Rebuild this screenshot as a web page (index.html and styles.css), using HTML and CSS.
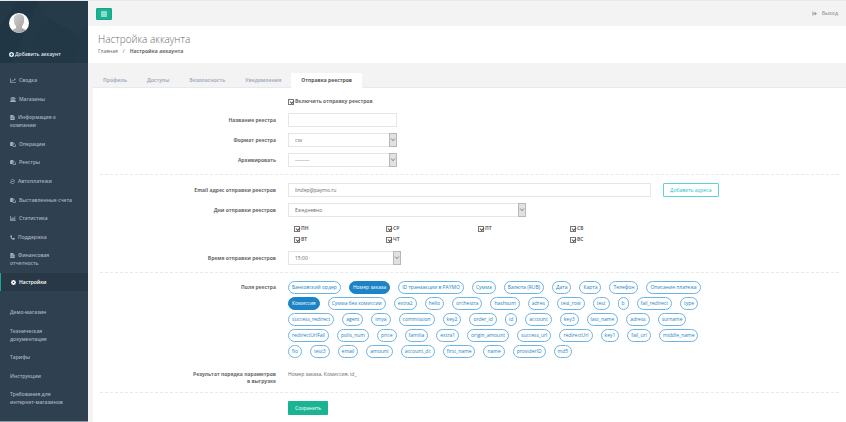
FILE: index.html
```html
<!DOCTYPE html>
<html lang="ru">
<head>
<meta charset="utf-8">
<title>Настройка аккаунта</title>
<link rel="stylesheet" href="styles.css">
</head>
<body>
<svg class="defs" aria-hidden="true">
  <symbol id="i-chart" viewBox="0 0 16 14"><path d="M1 1v12h15M3 10l4-4 2 2 5-5M11 3h3v3" fill="none" stroke="currentColor" stroke-width="2"/></symbol>
  <symbol id="i-bank" viewBox="0 0 16 14"><path d="M8 0l8 3v1H0V3zM2 5h2v5H2zM5 5h2v5H5zM9 5h2v5H9zM12 5h2v5h-2zM1 10h14v2H1zM0 12h16v2H0z" fill="currentColor"/></symbol>
  <symbol id="i-file" viewBox="0 0 12 14"><path d="M0 0h7v5h5v9H0zM8 0l4 4H8zM3 7v1h6V7zM3 10v1h6v-1z" fill="currentColor" fill-rule="evenodd"/></symbol>
  <symbol id="i-copy" viewBox="0 0 16 14"><path d="M0 1h3v10H0zM3 0h6v4H7v7H3z" fill="currentColor"/><path d="M8 5h4l3 3v5H8z" fill="none" stroke="currentColor" stroke-width="2"/></symbol>
  <symbol id="i-refresh" viewBox="0 0 16 14"><path d="M2 4a6 5 0 0 1 11-1M14 10a6 5 0 0 1-11 1M4 7h8" fill="none" stroke="currentColor" stroke-width="2"/><path d="M15 1v5h-5zM1 13V8h5z" fill="currentColor"/></symbol>
  <symbol id="i-bars" viewBox="0 0 16 14"><path d="M1 0v13h15M4 12V7M7 12V3M10 12V5M13 12V1" fill="none" stroke="currentColor" stroke-width="2"/></symbol>
  <symbol id="i-phone" viewBox="0 0 14 14"><path d="M1 2l3-2 2 4-2 2 4 4 2-2 4 2-2 3C7 15 0 8 1 2z" fill="currentColor"/></symbol>
  <symbol id="i-gear" viewBox="0 0 14 14"><path d="M6 0h2l1 2 2-1 2 2-1 2 2 1v2l-2 1 1 2-2 2-2-1-1 2H6l-1-2-2 1-2-2 1-2-2-1V6l2-1-1-2 2-2 2 1zM7 5a2 2 0 1 0 0 4 2 2 0 0 0 0-4z" fill="currentColor" fill-rule="evenodd"/></symbol>
  <symbol id="i-plus" viewBox="0 0 14 14"><path d="M7 0a7 7 0 1 0 0 14A7 7 0 0 0 7 0zM6 3h2v3h3v2H8v3H6V8H3V6h3z" fill="currentColor" fill-rule="evenodd"/></symbol>
  <symbol id="i-exit" viewBox="0 0 16 14"><path d="M6 2H1v10h5" fill="none" stroke="currentColor" stroke-width="2"/><path d="M4 5h5V1l7 6-7 6V9H4z" fill="currentColor"/></symbol>
  <symbol id="i-down" viewBox="0 0 8 14"><path d="M1.500 5L4 8l2.500-3" fill="none" stroke="currentColor"/></symbol>
</svg>
<div class="page">
  <aside class="sidebar">
    <div class="profile">
      <svg class="poly" viewBox="0 0 88 62" preserveAspectRatio="none" aria-hidden="true"><path d="M0 26L18 0h20L12 62H0z" fill="#213645"/><path d="M38 0l8 16 32 18 10-12V0z" fill="#263b4a"/><path d="M46 16l-16 28 12 18h34l2-28z" fill="#233847"/></svg>
      <svg class="avatar" viewBox="0 0 20 20" role="img" aria-label="Аватар"><defs><linearGradient id="skin" x2="1" y2="1"><stop stop-color="#d4d4d4"/><stop offset="1" stop-color="#999"/></linearGradient><clipPath id="round"><circle cx="10" cy="10" r="10"/></clipPath></defs><g clip-path="url(#round)"><path d="M0 0h20v20H0z" fill="#fff"/><path d="M10 1c4 0 6 3 5 7-.3 3-1 4-2 5v2l4 2v3H3v-3l4-2v-2c-1-1-2-2-2-5-1-4 1-7 5-7z" fill="url(#skin)"/></g></svg>
      <a class="add" href="#"><svg class="ico"><use href="#i-plus"/></svg>Добавить аккаунт</a>
    </div>
    <nav class="menu">
      <a href="#"><svg class="ico wide"><use href="#i-chart"/></svg>Сводка</a>
      <a href="#"><svg class="ico wide"><use href="#i-bank"/></svg>Магазины</a>
      <a href="#"><svg class="ico"><use href="#i-file"/></svg>Информация о компании</a>
      <a href="#"><svg class="ico wide"><use href="#i-copy"/></svg>Операции</a>
      <a href="#"><svg class="ico wide"><use href="#i-copy"/></svg>Реестры</a>
      <a href="#"><svg class="ico"><use href="#i-refresh"/></svg>Автоплатежи</a>
      <a href="#"><svg class="ico wide"><use href="#i-copy"/></svg>Выставленные счета</a>
      <a href="#"><svg class="ico wide"><use href="#i-bars"/></svg>Статистика</a>
      <a href="#"><svg class="ico"><use href="#i-phone"/></svg>Поддержка</a>
      <a href="#"><svg class="ico"><use href="#i-file"/></svg>Финансовая отчетность</a>
      <a href="#" class="current"><svg class="ico"><use href="#i-gear"/></svg>Настройки</a>
    </nav>
    <nav class="menu extra">
      <a href="#">Демо-магазин</a>
      <a href="#">Техническая документация</a>
      <a href="#">Тарифы</a>
      <a href="#">Инструкции</a>
      <a href="#">Требования для интернет-магазинов</a>
    </nav>
  </aside>
  <main class="main">
    <header class="topbar">
      <button class="toggle" type="button" aria-label="Меню"><svg viewBox="0 0 6 6"><path d="M0 1h6M0 3h6M0 5h6" stroke="currentColor"/></svg></button>
      <a class="logout" href="#"><svg class="ico"><use href="#i-exit"/></svg>Выход</a>
    </header>
    <div class="heading">
      <h1>Настройка аккаунта</h1>
      <div class="crumbs"><a href="#">Главная</a><span>/</span><strong>Настройка аккаунта</strong></div>
    </div>
    <div class="tabs">
      <a href="#">Профиль</a><a href="#">Доступы</a><a href="#">Безопасность</a><a href="#">Уведомления</a><a href="#" class="on">Отправка реестров</a>
    </div>
    <form class="panel">
      <section>
        <div class="row check-row"><span></span><label class="check"><input type="checkbox" checked>Включить отправку реестров</label></div>
        <div class="row"><label for="name">Название реестра</label><input class="box short" id="name" type="text"></div>
        <div class="row"><label for="format">Формат реестра</label><span class="pick short"><select class="box" id="format"><option>csv</option></select><svg><use href="#i-down"/></svg></span></div>
        <div class="row"><label for="zip">Архивировать</label><span class="pick short"><select class="box" id="zip"><option>---------</option></select><svg><use href="#i-down"/></svg></span></div>
      </section>
      <section>
        <div class="row"><label for="email">Email адрес отправки реестров</label><div class="mail"><input class="box" id="email" type="text" value="lindep@paymo.ru"><button class="outline" type="button">Добавить адреса</button></div></div>
        <div class="row"><label for="days">Дни отправки реестров</label><span class="pick long"><select class="box" id="days"><option>Ежедневно</option></select><svg><use href="#i-down"/></svg></span></div>
        <div class="row"><span></span><div class="days">
          <label class="check"><input type="checkbox" checked>ПН</label><label class="check"><input type="checkbox" checked>ВТ</label>
          <label class="check"><input type="checkbox" checked>СР</label><label class="check"><input type="checkbox" checked>ЧТ</label>
          <label class="check"><input type="checkbox" checked>ПТ</label>
          <label class="check"><input type="checkbox" checked>СБ</label><label class="check"><input type="checkbox" checked>ВС</label>
        </div></div>
        <div class="row"><label for="time">Время отправки реестров</label><span class="pick mid"><select class="box" id="time"><option>15:00</option></select><svg><use href="#i-down"/></svg></span></div>
      </section>
      <section class="fields">
        <div class="row top"><span class="name first">Поля реестра</span><div class="chips">
          <div><button type="button">Банковский ордер</button><button type="button" class="sel">Номер заказа</button><button type="button">ID транзакции в PAYMO</button><button type="button">Сумма</button><button type="button">Валюта (RUB)</button><button type="button">Дата</button><button type="button">Карта</button><button type="button">Телефон</button><button type="button">Описание платежа</button></div>
          <div><button type="button" class="sel">Комиссия</button><button type="button">Сумма без комиссии</button><button type="button">extra2</button><button type="button">hello</button><button type="button">orchestra</button><button type="button">hashsum</button><button type="button">adres</button><button type="button">test_row</button><button type="button">test</button><button type="button">b</button><button type="button">fail_redirect</button><button type="button">type</button></div>
          <div><button type="button">success_redirect</button><button type="button">agent</button><button type="button">imya</button><button type="button">commission</button><button type="button">key2</button><button type="button">order_id</button><button type="button">id</button><button type="button">account</button><button type="button">key3</button><button type="button">last_name</button><button type="button">adress</button><button type="button">surname</button></div>
          <div><button type="button">redirectUrlFail</button><button type="button">polis_num</button><button type="button">price</button><button type="button">familia</button><button type="button">extra1</button><button type="button">origin_amount</button><button type="button">success_url</button><button type="button">redirectUrl</button><button type="button">key1</button><button type="button">fail_url</button><button type="button">middle_name</button></div>
          <div><button type="button">fio</button><button type="button">test3</button><button type="button">email</button><button type="button">amount</button><button type="button">account_dc</button><button type="button">first_name</button><button type="button">name</button><button type="button">providerID</button><button type="button">md5</button></div>
        </div></div>
        <div class="row top"><span class="name">Результат порядка параметров<br>в выгрузке</span><span>Номер заказа, Комиссия, id_</span></div>
      </section>
      <section>
        <div class="row"><span></span><button class="save" type="submit">Сохранить</button></div>
      </section>
    </form>
  </main>
</div>
</body>
</html>
```
FILE: styles.css
```css
* { box-sizing: border-box; }
body { margin: 0; background: #f3f3f4; color: #676a6c; font: 5px/7px "Open Sans", "Noto Sans", sans-serif; }
a { color: inherit; text-decoration: none; }
button, input, select { font: inherit; color: inherit; margin: 0; }
.defs { display: none; }
.page { display: flex; min-height: 100vh; border-top: 1px solid #e7eaec; }
.ico { width: 5px; height: 5px; flex: none; }
.ico.wide { width: 6px; }

.sidebar { width: 88px; flex: none; background: #2f4050; color: #a7b1c2; border-bottom: 1px solid #8d97a4; }
.profile { position: relative; height: 62px; padding: 12px 9px 0; background: #243947; color: #dfe4ed; }
.poly { position: absolute; inset: 0; width: 100%; height: 100%; }
.avatar { position: relative; display: block; width: 20px; height: 20px; }
.add { position: relative; display: flex; align-items: center; gap: 1px; margin-top: 18px; font-weight: 600; white-space: nowrap; }
.menu { display: flex; flex-direction: column; justify-content: space-between; min-height: 220px; margin-top: 8px; font-weight: 600; }
.menu a { padding: 5px 12px 5px 10px; line-height: 8px; }
.menu .ico { margin-right: 3px; vertical-align: -1px; }
.menu .current { background: #293846; color: #fff; border-left: 1px solid #19aa8d; }
.menu.extra { min-height: 108px; margin-top: 12px; }

.main { flex: 1; min-width: 0; }
.topbar { display: flex; justify-content: space-between; align-items: center; height: 25px; padding: 0 8px; }
.toggle { width: 16px; height: 12px; padding: 0; border: 1px solid #18a689; border-radius: 1px; background: #1ab394; color: #fff; display: flex; align-items: center; justify-content: center; }
.toggle svg { width: 6px; height: 6px; }
.logout { display: flex; align-items: center; gap: 5px; color: #999c9e; font-weight: 600; }
.heading { height: 37px; padding: 6px 10px 0; background: #fff; }
h1 { margin: 0; font-size: 10px; line-height: 14px; font-weight: 300; }
.crumbs { display: flex; gap: 5px; line-height: 11px; }
.tabs { display: flex; align-items: flex-end; height: 25px; margin-left: 5px; border-bottom: 1px solid #e7eaec; color: #a7b1c2; font-weight: 700; }
.tabs a { padding: 4px 10px 3px; }
.tabs .on { margin-bottom: -1px; padding-bottom: 4px; background: #fff; color: #555; }

.panel { margin-left: 5px; padding: 8px 7px 0; background: #fff; }
section { display: flex; flex-direction: column; gap: 6px; padding-bottom: 7px; }
section + section { padding-top: 8px; border-top: 1px dashed #e7eaec; }
.row { display: grid; grid-template-columns: 176px minmax(0, 1fr); column-gap: 12px; align-items: center; }
.row > label:first-child, .name { font-weight: 700; text-align: right; }
.row.top { align-items: start; }
.name.first { line-height: 13px; }
.check-row { min-height: 11px; }
.box { display: block; width: 100%; height: 14px; padding: 0 6px; border: 1px solid #e5e6e7; border-radius: 0; background: #fff; appearance: none; outline: 0; }
.short { width: 109px; }
.mid { width: 113px; }
.long { width: 238px; }
.pick { position: relative; display: block; }
.pick svg { position: absolute; top: 0; right: 0; width: 8px; height: 14px; border: 1px solid #b8b8b8; background: #e1e1e1; color: #666; pointer-events: none; }
.mail { display: flex; align-items: center; gap: 12px; }
.mail .box { width: 363px; }
.outline { height: 14px; padding: 0 6px; border: 1px solid #5fd3d5; border-radius: 1px; background: #fff; color: #23c6c8; white-space: nowrap; }
.check { display: flex; align-items: center; gap: 1px; font-weight: 700; }
.check input { appearance: none; position: relative; width: 6px; height: 6px; border: 1px solid #777; background: #fff; }
.check input:checked::after { content: ""; position: absolute; left: 1px; top: 0; width: 3px; height: 2px; border: solid #555; border-width: 0 0 1px 1px; transform: rotate(-45deg); }
.days { display: grid; grid-template-rows: 11px 11px; grid-auto-flow: column; grid-auto-columns: 92px; padding-left: 6px; }
.days .check:nth-child(n+6) { grid-column: 4; }
.chips { display: flex; flex-direction: column; gap: 3px; }
.chips div { display: flex; gap: 8px; }
.chips button { height: 13px; padding: 0 3px; border: 1px solid #6fb3e0; border-radius: 7px; background: #fff; color: #1c84c6; white-space: nowrap; }
.chips .sel { background: #1c84c6; border-color: #1c84c6; color: #fff; }
.fields { gap: 13px; }
.save { justify-self: start; height: 14px; padding: 0 7px; border: 0; border-radius: 1px; background: #1ab394; color: #fff; }
```
